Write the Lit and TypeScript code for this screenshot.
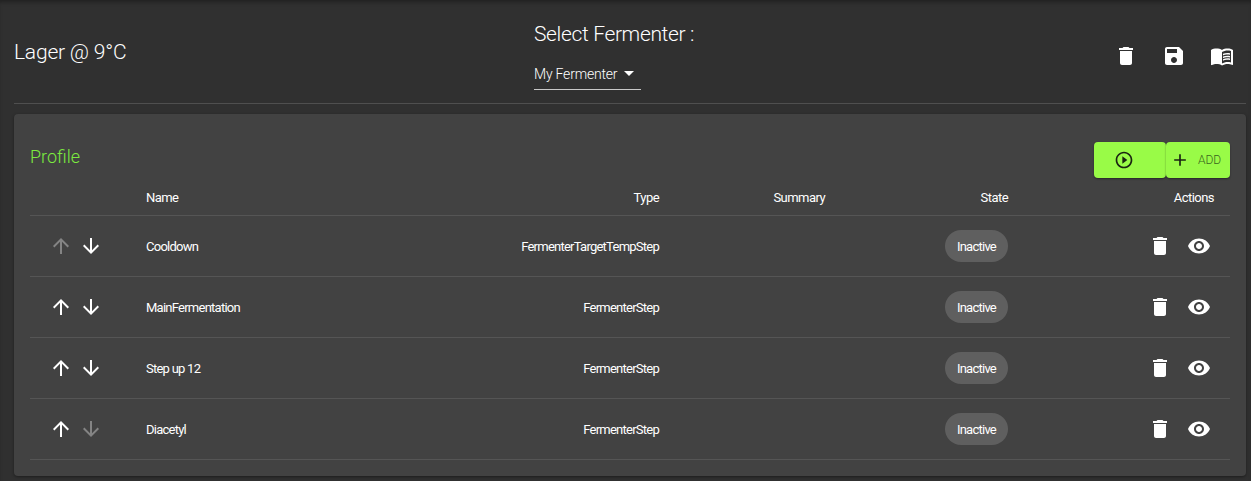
import { css, html, LitElement, svg } from "lit";
import { customElement } from "lit/decorators.js";

const ICONS = {
  trash: svg`<path d="M6 19c0 1.1.9 2 2 2h8c1.1 0 2-.9 2-2V7H6v12zM19 4h-3.5l-1-1h-5l-1 1H5v2h14V4z" />`,
  save: svg`<path d="M17 3H5c-1.11 0-2 .9-2 2v14c0 1.1.89 2 2 2h14c1.1 0 2-.9 2-2V7l-4-4zm-5 16c-1.66 0-3-1.34-3-3s1.34-3 3-3 3 1.34 3 3-1.34 3-3 3zm3-10H5V5h10v4z" />`,
  book: svg`<path d="M21 5c-1.11-.35-2.33-.5-3.5-.5-1.95 0-4.05.4-5.5 1.5-1.45-1.1-3.55-1.5-5.5-1.5S2.45 4.9 1 6v14.65c0 .25.25.5.5.5.1 0 .15-.05.25-.05C3.1 20.45 5.05 20 6.5 20c1.95 0 4.05.4 5.5 1.5 1.35-.85 3.8-1.5 5.5-1.5 1.65 0 3.35.3 4.75 1.05.1.05.15.05.25.05.25 0 .5-.25.5-.5V6c-.6-.45-1.25-.75-2-1zm0 13.5c-1.1-.35-2.3-.5-3.5-.5-1.7 0-4.15.65-5.5 1.5V8c1.35-.85 3.8-1.5 5.5-1.5 1.2 0 2.4.15 3.5.5v11.5z" /><path d="M17.5 10.5c.88 0 1.73.09 2.5.26V9.24c-.79-.15-1.64-.24-2.5-.24-1.7 0-3.24.29-4.5.83v1.66c1.13-.64 2.7-.99 4.5-.99zM13 12.49v1.66c1.13-.64 2.7-.99 4.5-.99.88 0 1.73.09 2.5.26V11.9c-.79-.15-1.64-.24-2.5-.24-1.7 0-3.24.3-4.5.83zM17.5 14.33c-1.7 0-3.24.29-4.5.83v1.66c1.13-.64 2.7-.99 4.5-.99.88 0 1.73.09 2.5.26v-1.52c-.79-.16-1.64-.24-2.5-.24z" />`,
  up: svg`<path d="M4 12l1.41 1.41L11 7.83V20h2V7.83l5.58 5.59L20 12l-8-8-8 8z" />`,
  down: svg`<path d="M20 12l-1.41-1.41L13 16.17V4h-2v12.17l-5.58-5.59L4 12l8 8 8-8z" />`,
  eye: svg`<path d="M12 4.5C7 4.5 2.73 7.61 1 12c1.73 4.39 6 7.5 11 7.5s9.27-3.11 11-7.5c-1.73-4.39-6-7.5-11-7.5zM12 17c-2.76 0-5-2.24-5-5s2.24-5 5-5 5 2.24 5 5-2.24 5-5 5zm0-8c-1.66 0-3 1.34-3 3s1.34 3 3 3 3-1.34 3-3-1.34-3-3-3z" />`,
  play: svg`<path d="M10 16.5l6-4.5-6-4.5v9zM12 2C6.48 2 2 6.48 2 12s4.48 10 10 10 10-4.48 10-10S17.52 2 12 2zm0 18c-4.41 0-8-3.59-8-8s3.59-8 8-8 8 3.59 8 8-3.59 8-8 8z" />`,
  add: svg`<path d="M19 13h-6v6h-2v-6H5v-2h6V5h2v6h6v2z" />`,
};

type IconName = keyof typeof ICONS;

const STEPS = [
  { name: "Cooldown", type: "FermenterTargetTempStep", first: true, last: false },
  { name: "MainFermentation", type: "FermenterStep", first: false, last: false },
  { name: "Step up 12", type: "FermenterStep", first: false, last: false },
  { name: "Diacetyl", type: "FermenterStep", first: false, last: true },
];

function icon(name: IconName, cls = "") {
  return html`<svg class="icon ${cls}" viewBox="0 0 24 24" fill="currentColor">${ICONS[name]}</svg>`;
}

@customElement("app-root")
export class AppRoot extends LitElement {
  render() {
    return html`
      <header class="top">
        <div class="title">Lager @ 9°C</div>
        <div class="picker">
          <div class="picker-label">Select Fermenter :</div>
          <div class="select">My Fermenter<span class="caret"></span></div>
        </div>
        <div class="top-actions">
          <span class="icon-btn">${icon("trash")}</span>
          <span class="icon-btn">${icon("save")}</span>
          <span class="icon-btn">${icon("book")}</span>
        </div>
      </header>

      <section class="card">
        <div class="card-head">
          <h2 class="card-title">Profile</h2>
          <div class="buttons">
            <button class="btn play">${icon("play")}</button>
            <button class="btn add">${icon("add")}<span>ADD</span></button>
          </div>
        </div>
        <table>
          <thead>
            <tr>
              <th class="col-move"></th>
              <th class="col-name">Name</th>
              <th class="col-type">Type</th>
              <th class="col-summary">Summary</th>
              <th class="col-state">State</th>
              <th class="col-actions">Actions</th>
            </tr>
          </thead>
          <tbody>
            ${STEPS.map(
              (step) => html`
                <tr>
                  <td class="col-move">
                    <div class="moves">
                      ${icon("up", step.first ? "off" : "")}
                      ${icon("down", step.last ? "off" : "")}
                    </div>
                  </td>
                  <td class="col-name">${step.name}</td>
                  <td class="col-type">${step.type}</td>
                  <td class="col-summary"></td>
                  <td class="col-state"><span class="chip">Inactive</span></td>
                  <td class="col-actions">
                    <div class="row-actions">${icon("trash")}${icon("eye")}</div>
                  </td>
                </tr>
              `
            )}
          </tbody>
        </table>
      </section>
    `;
  }

  static styles = css`
    :host {
      display: block;
      box-sizing: border-box;
      height: 481px;
      padding: 0 5px 0 14px;
      overflow: hidden;
      background: #303030;
      box-shadow: inset 0 4px 4px -2px rgba(0, 0, 0, 0.35);
      color: #fff;
      font-family: "Roboto", sans-serif;
      font-weight: 300;
    }

    .icon {
      display: block;
      width: 24px;
      height: 24px;
      flex: none;
    }

    .top {
      display: grid;
      grid-template-columns: 520px 1fr auto;
      height: 103px;
      border-bottom: 1px solid #4f4f4f;
    }

    .title {
      padding-top: 40px;
      font-size: 21px;
      line-height: 24px;
      letter-spacing: -0.2px;
    }

    .picker {
      padding-top: 21px;
    }

    .picker-label {
      font-size: 21px;
      line-height: 26px;
      letter-spacing: -0.35px;
    }

    .select {
      display: flex;
      align-items: center;
      box-sizing: border-box;
      width: 107px;
      height: 32px;
      margin-top: 11px;
      border-bottom: 1px solid #c8c8c8;
      font-size: 14px;
      letter-spacing: -0.2px;
    }

    .caret {
      margin-left: 7px;
      border-left: 5px solid transparent;
      border-right: 5px solid transparent;
      border-top: 5px solid #fff;
    }

    .top-actions {
      display: flex;
      padding-top: 44px;
    }

    .icon-btn {
      display: flex;
      justify-content: center;
      width: 48px;
    }

    .card {
      margin-top: 10px;
      height: 362px;
      box-sizing: border-box;
      padding: 28px 16px 0;
      border-radius: 4px;
      background: #424242;
      box-shadow: 0 1px 3px rgba(0, 0, 0, 0.4);
    }

    .card-head {
      display: flex;
      justify-content: space-between;
      align-items: center;
      height: 36px;
    }

    .card-title {
      margin: 0 0 8px;
      font-size: 18px;
      font-weight: 300;
      color: #7ceb3f;
    }

    .buttons {
      display: flex;
    }

    .btn {
      display: flex;
      align-items: center;
      justify-content: center;
      height: 36px;
      padding: 0;
      border: 0;
      border-radius: 4px;
      background: #99fb47;
      box-shadow: 0 1px 2px rgba(0, 0, 0, 0.4);
      color: #1a2412;
      font: inherit;
    }

    .btn.play {
      width: 72px;
      padding-right: 12px;
    }

    .btn.play .icon,
    .btn.add .icon {
      width: 20px;
      height: 20px;
    }

    .btn.add {
      justify-content: flex-start;
      width: 64px;
      padding-left: 4px;
      gap: 8px;
    }

    .btn.add span {
      font-size: 12px;
      color: #3a6420;
    }

    table {
      width: 100%;
      border-collapse: collapse;
      table-layout: fixed;
      font-size: 13px;
    }

    th,
    td {
      padding: 0 16px;
      border-bottom: 1px solid #555;
      font-weight: 400;
      text-align: right;
      letter-spacing: -0.75px;
    }

    th {
      height: 36px;
      padding-top: 1px;
      letter-spacing: -0.55px;
    }

    td {
      height: 60px;
    }

    .col-move {
      width: 68px;
    }

    .col-name {
      width: 313px;
      text-align: left;
    }

    .col-type {
      width: 168px;
      text-align: right;
    }

    .col-summary {
      width: 134px;
    }

    .col-state {
      width: 151px;
    }

    .moves {
      display: flex;
      gap: 6px;
      margin-left: 3px;
      margin-right: -16px;
    }

    .off {
      opacity: 0.35;
    }

    .chip {
      display: inline-block;
      height: 32px;
      padding: 0 12px;
      border-radius: 16px;
      background: #5f5f5f;
      line-height: 33px;
    }

    .row-actions {
      display: flex;
      justify-content: flex-end;
      gap: 15px;
      margin-right: 3px;
    }
  `;
}

declare global {
  interface HTMLElementTagNameMap {
    "app-root": AppRoot;
  }
}
